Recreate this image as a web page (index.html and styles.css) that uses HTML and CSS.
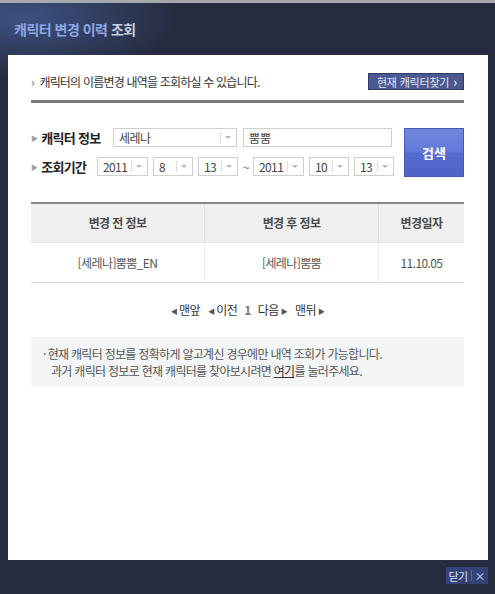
FILE: index.html
```html
<!DOCTYPE html>
<html lang="ko">
<head>
  <meta charset="UTF-8">
  <title>캐릭터 변경 이력 조회</title>
  <link rel="stylesheet" href="styles.css">
</head>
<body>
  <div class="window">
    <div class="title-bar">
      <h1 class="title"><span class="title-main">캐릭터 변경 이력</span> <span class="title-sub">조회</span></h1>
    </div>

    <div class="panel">
      <div class="intro">
        <p class="intro-text"><span class="gt">&rsaquo;</span> 캐릭터의 이름변경 내역을 조회하실 수 있습니다.</p>
        <a class="find-btn" href="#">현재 캐릭터찾기 <span class="gt">&rsaquo;</span></a>
      </div>
      <div class="divider"></div>

      <div class="search">
        <div class="search-rows">
          <div class="search-row">
            <span class="label label-info"><span class="tri">&#9654;</span>캐릭터 정보</span>
            <div class="select w-server"><span class="val">세레나</span><span class="arrow"></span></div>
            <input class="name-input" type="text" value="뿜뿜">
          </div>
          <div class="search-row">
            <span class="label label-period"><span class="tri">&#9654;</span>조회기간</span>
            <div class="select w-year"><span class="val">2011</span><span class="arrow"></span></div>
            <div class="select w-num"><span class="val">8</span><span class="arrow"></span></div>
            <div class="select w-num"><span class="val">13</span><span class="arrow"></span></div>
            <span class="tilde">~</span>
            <div class="select w-year"><span class="val">2011</span><span class="arrow"></span></div>
            <div class="select w-num"><span class="val">10</span><span class="arrow"></span></div>
            <div class="select w-num"><span class="val">13</span><span class="arrow"></span></div>
          </div>
        </div>
        <button class="search-btn" type="button">검색</button>
      </div>

      <table class="history">
        <thead>
          <tr>
            <th class="col-a">변경 전 정보</th>
            <th class="col-b">변경 후 정보</th>
            <th class="col-c">변경일자</th>
          </tr>
        </thead>
        <tbody>
          <tr>
            <td>[세레나]뿜뿜_EN</td>
            <td>[세레나]뿜뿜</td>
            <td>11.10.05</td>
          </tr>
        </tbody>
      </table>

      <div class="paging">
        <a href="#"><span class="ptri">&#9664;</span>맨앞</a>
        <a href="#"><span class="ptri">&#9664;</span>이전</a>
        <strong class="current">1</strong>
        <a href="#">다음<span class="ptri">&#9654;</span></a>
        <a href="#">맨뒤<span class="ptri">&#9654;</span></a>
      </div>

      <div class="notice">
        <p><span class="dot">·</span>현재 캐릭터 정보를 정확하게 알고계신 경우에만 내역 조회가 가능합니다.</p>
        <p class="indent">과거 캐릭터 정보로 현재 캐릭터를 찾아보시려면 <a href="#">여기</a>를 눌러주세요.</p>
      </div>
    </div>

    <div class="footer">
      <a class="close-btn" href="#">닫기<span class="sep"></span>×</a>
    </div>
  </div>
</body>
</html>
```

FILE: styles.css
```css
:root {
  --bg: #262b3f;
  --text: #444;
  --line: #d9d9d9;
  --accent: #5a6fd4;
}

html, body {
  margin: 0;
  padding: 0;
}

body {
  background-color: var(--bg);
  font-family: "Noto Sans CJK KR", "Noto Sans", sans-serif;
  font-size: 12px;
  letter-spacing: -0.6px;
  color: var(--text);
}

p {
  margin: 0;
}

a {
  color: inherit;
  text-decoration: none;
}

.window {
  width: 495px;
  height: 594px;
  border-top: 3px solid #a6a9ae;
  box-sizing: border-box;
  background: radial-gradient(ellipse 160px 60px at 20px 15px, #3d5283 0%, rgba(38, 43, 63, 0) 100%), var(--bg);
}

.title-bar {
  height: 52px;
  display: flex;
  align-items: center;
  padding-left: 14px;
}

.title {
  margin: 0;
  font-size: 14px;
  font-weight: bold;
  letter-spacing: -0.5px;
}

.title-main {
  color: #8ea6e6;
}

.title-sub {
  color: #c9cee0;
}

.panel {
  margin: 0 7px 0 8px;
  height: 505px;
  background: #fff;
  padding: 18px 24px 0 23px;
  box-sizing: border-box;
}

/* intro */
.intro {
  display: flex;
  justify-content: space-between;
  align-items: center;
  height: 17px;
}

.intro-text {
  color: #333;
  letter-spacing: -0.8px;
}

.gt {
  color: #666;
  margin-right: 3px;
}

.find-btn {
  display: flex;
  align-items: center;
  height: 17px;
  padding: 0 6px 0 8px;
  background: #4a5990;
  border: 1px solid #2f3a68;
  box-sizing: border-box;
  color: #e2e6f5;
  font-size: 11px;
  letter-spacing: -0.2px;
}

.find-btn .gt {
  color: #fff;
  margin: 0 0 0 4px;
  font-size: 13px;
}

.divider {
  height: 3px;
  background: #7a7b7f;
  margin-top: 10px;
}

/* search */
.search {
  display: flex;
  justify-content: space-between;
  margin-top: 25px;
}

.search-rows {
  display: flex;
  flex-direction: column;
  gap: 10px;
}

.search-row {
  display: flex;
  align-items: center;
  gap: 5px;
  height: 19px;
}

.label {
  font-size: 13px;
  font-weight: bold;
  color: #222;
  white-space: nowrap;
  letter-spacing: -0.7px;
}

.label-info { width: 77px; }
.label-period { width: 61px; }

.tri {
  color: #a0a0a0;
  font-size: 7px;
  margin-right: 4px;
  vertical-align: 2px;
}

.select {
  display: flex;
  align-items: center;
  justify-content: space-between;
  height: 19px;
  border: 1px solid #cfcfcf;
  box-sizing: border-box;
  padding-left: 5px;
  color: #444;
}

.w-server { width: 124px; }
.w-year { width: 51px; }
.w-num { width: 40px; }

.arrow {
  flex: none;
  width: 15px;
  height: 11px;
  border-left: 1px solid #ddd;
  position: relative;
}

.arrow::after {
  content: "";
  position: absolute;
  left: 4px;
  top: 4px;
  border-left: 3px solid transparent;
  border-right: 3px solid transparent;
  border-top: 3px solid #b8b8b8;
}

.name-input {
  width: 149px;
  height: 19px;
  border: 1px solid #cfcfcf;
  box-sizing: border-box;
  padding: 0 5px;
  margin-left: 1px;
  font: inherit;
  color: #444;
}

.tilde {
  color: #666;
  width: 5px;
}

.search-btn {
  width: 60px;
  height: 49px;
  border: 1px solid #4658b8;
  background: linear-gradient(#7088df 0%, #6379d9 48%, #566bcf 52%, #4e62c8 100%);
  color: #fff;
  font: inherit;
  font-size: 13px;
  font-weight: bold;
  padding: 0;
  cursor: pointer;
}

/* table */
.history {
  width: 100%;
  margin-top: 25px;
  border-collapse: collapse;
  border-top: 2px solid #888;
  border-bottom: 1px solid #d4d4d4;
}

.history th,
.history td {
  padding: 0;
  line-height: 16px;
}

.history th {
  height: 38px;
  background: #f0f0f0;
  font-weight: bold;
  color: #4a4a4a;
  border-left: 1px solid #e0e0e0;
}

.history td {
  height: 39px;
  text-align: center;
  color: #555;
  border-left: 1px solid #ececec;
  border-top: 1px solid #e4e4e4;
}

.history th:first-child,
.history td:first-child {
  border-left: none;
}

.col-a { width: 173px; }
.col-b { width: 173px; }

/* paging */
.paging {
  display: flex;
  justify-content: center;
  gap: 6px;
  margin-top: 18px;
  height: 16px;
  align-items: center;
  color: #333;
}

.ptri {
  font-size: 7px;
  color: #555;
  margin: 0 2px;
  vertical-align: 1px;
}

.current {
  color: #777;
  margin: 0 1px;
}

/* notice */
.notice {
  margin-top: 20px;
  background: #f3f5f7;
  padding: 8px 14px 8px 12px;
  color: #555;
  line-height: 17px;
  letter-spacing: -0.7px;
}

.dot {
  margin-right: 2px;
}

.indent {
  padding-left: 8px;
}

.notice a {
  text-decoration: underline;
  color: #333;
}

/* footer */
.footer {
  display: flex;
  justify-content: flex-end;
  padding: 7px 7px 0 0;
}

.close-btn {
  display: flex;
  align-items: center;
  height: 17px;
  padding: 0 3px;
  background: #34427a;
  color: #dfe3f2;
  font-size: 11px;
}

.sep {
  width: 1px;
  height: 11px;
  background: #5b6699;
  margin: 0 3px 0 3px;
}
```
